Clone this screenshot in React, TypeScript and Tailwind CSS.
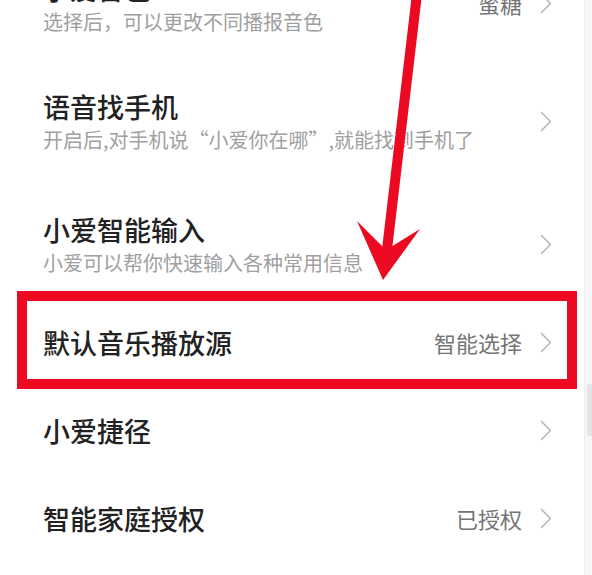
type Item = {
  title: string;
  desc?: string;
  value?: string;
  marked?: boolean;
  shifted?: boolean;
};

const items: Item[] = [
  { title: "小爱音色", desc: "选择后，可以更改不同播报音色", value: "蜜糖" },
  { title: "语音找手机", desc: "开启后,对手机说“小爱你在哪”,就能找到手机了" },
  { title: "小爱智能输入", desc: "小爱可以帮你快速输入各种常用信息", shifted: true },
  { title: "默认音乐播放源", value: "智能选择", marked: true },
  { title: "小爱捷径" },
  { title: "智能家庭授权", value: "已授权" },
];

const Chevron = () => (
  <svg width="12" height="21" viewBox="0 0 12 21" fill="none" className="shrink-0">
    <polyline
      points="1.5,1.5 10.5,10.5 1.5,19.5"
      stroke="#b9b9b9"
      strokeWidth="1.6"
      strokeLinecap="round"
      strokeLinejoin="round"
    />
  </svg>
);

const Row = ({ item }: { item: Item }) => (
  <div
    className={`relative flex items-center justify-between pl-[43px] pr-[40px] ${
      item.desc ? "h-[118px]" : "h-[88px]"
    } ${item.shifted ? "pt-[10px]" : ""}`}
  >
    <div className="flex flex-col">
      <p className="text-[27px] leading-[35px] font-medium text-[#222222]">{item.title}</p>
      {item.desc && (
        <p className="mt-[2px] text-[20px] leading-[28px] text-[#a0a0a0]">{item.desc}</p>
      )}
    </div>
    <div className="flex items-center gap-[18px]">
      {item.value && <span className="text-[22px] leading-[30px] text-[#757575]">{item.value}</span>}
      <Chevron />
    </div>
    {/* 红框标注 */}
    {item.marked && (
      <div className="pointer-events-none absolute -top-[7px] -bottom-[3px] left-[17px] right-[15px] border-[10px] border-[#ec0a22]" />
    )}
  </div>
);

export default function App() {
  return (
    <div className="relative h-[575px] w-[592px] overflow-hidden bg-white font-['Noto_Sans_CJK_SC','Noto_Sans',sans-serif]">
      <div className="-mt-[56px]">
        {items.map((item) => (
          <Row key={item.title} item={item} />
        ))}
      </div>

      {/* 右侧滚动条 */}
      <div className="absolute top-0 right-0 bottom-0 w-[8px] border-l border-[#ededed] bg-[#f7f7f7]">
        <div className="mt-[384px] ml-[2px] h-[52px] w-[6px] rounded-sm bg-[#e4e4e4]" />
      </div>

      {/* 红色箭头 */}
      <svg
        className="pointer-events-none absolute inset-0"
        width="592"
        height="575"
        viewBox="0 0 592 575"
      >
        <line x1="417" y1="-6" x2="386" y2="258" stroke="#ec0a22" strokeWidth="10" />
        <polygon points="383,280 357,221 386,250 420,229" fill="#ec0a22" />
      </svg>
    </div>
  );
}
